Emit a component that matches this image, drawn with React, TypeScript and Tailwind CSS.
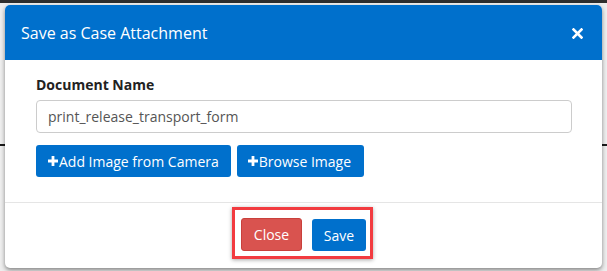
import React from "react";

function PlusIcon() {
  return (
    <svg width="10" height="10" viewBox="0 0 10 10" className="shrink-0">
      <path d="M3.6 0h2.8v3.6H10v2.8H6.4V10H3.6V6.4H0V3.6h3.6z" fill="currentColor" />
    </svg>
  );
}

function CloseIcon() {
  return (
    <svg width="11" height="11" viewBox="0 0 11 11">
      <path d="M1.5 1.5l8 8M9.5 1.5l-8 8" stroke="currentColor" strokeWidth="2.6" strokeLinecap="square" />
    </svg>
  );
}

export default function App() {
  return (
    <div className="relative w-[607px] h-[271px] overflow-hidden bg-[#eeeeee] font-['Open_Sans',sans-serif]">
      {/* page behind the modal */}
      <div className="h-[3px] bg-[#2e2e2e]" />
      <div className="absolute left-0 right-0 top-[144px] h-[2px] bg-[#1a1a1a]" />

      <section className="absolute left-[5px] top-[5px] w-[597px] h-[263px] flex flex-col rounded-[5px] bg-white overflow-hidden shadow-[0_2px_4px_rgba(0,0,0,0.45)]">
        <header className="h-[55px] shrink-0 flex items-center justify-between bg-[#0070cc] pl-[16px] pr-[19px] text-white">
          <h2 className="text-[16px] leading-[22px]">Save as Case Attachment</h2>
          <span className="pt-[1px]">
            <CloseIcon />
          </span>
        </header>

        <div className="flex flex-col pl-[31px] pr-[30px] pt-[15px] h-[143px] border-b border-[#e5e5e5]">
          <label className="text-[14px] leading-[20px] font-bold text-[#222]">Document Name</label>
          <div className="mt-[5px] h-[33px] flex items-center rounded-[4px] border border-[#cccccc] px-[11px] text-[14px] text-[#555]">
            print_release_transport_form
          </div>
          <div className="mt-[12px] flex gap-[6px]">
            <button className="h-[32px] flex items-center gap-[1px] rounded-[3px] bg-[#0070cc] pl-[12px] pr-[12px] text-[14px] text-white">
              <PlusIcon />
              Add Image from Camera
            </button>
            <button className="h-[32px] flex items-center gap-[1px] rounded-[3px] bg-[#0070cc] pl-[11px] pr-[13px] text-[14px] text-white">
              <PlusIcon />
              Browse Image
            </button>
          </div>
        </div>

        <footer className="flex justify-center pt-[4px] pr-[2px]">
          <div className="flex gap-[10px] border-[3px] border-[#f23b40] pl-[6px] pr-[4px] pt-[8px] pb-[5px] shadow-[0_1px_4px_rgba(0,0,0,0.35)]">
            <button className="h-[33px] w-[61px] rounded-[3px] border border-[#c9403b] bg-[#d9534f] text-[14px] text-white">
              Close
            </button>
            <button className="mt-[1px] h-[32px] w-[54px] rounded-[3px] bg-[#0070cc] text-[14px] text-white">
              Save
            </button>
          </div>
        </footer>
      </section>
    </div>
  );
}
